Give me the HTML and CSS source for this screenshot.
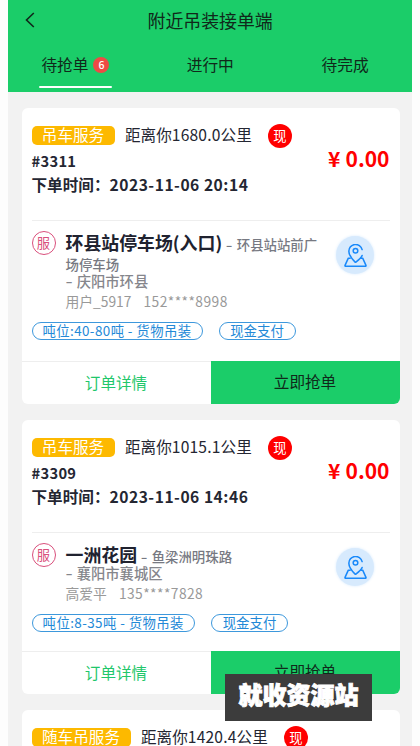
FILE: index.html
```html
<!DOCTYPE html>
<html lang="zh-CN">
<head>
<meta charset="utf-8">
<title>附近吊装接单端</title>
<link rel="stylesheet" href="styles.css">
</head>
<body>
<svg class="defs" width="0" height="0">
  <symbol id="map-pin" viewBox="0 0 24 24">
    <path d="M18.9 12Q18 14.5 12.4 18.9Q12 19.3 11.6 18.9C8.6 15.8 5.1 11.6 5.1 7.7A7 6.9 0 0 1 18.9 5.8"/>
    <circle cx="12" cy="7" r="2.4"/>
    <path d="M6.4 14.8H4.5L1.2 22Q.6 23.3 2 23.3H22Q23.4 23.3 22.8 22L19.5 14.8H17.3"/>
  </symbol>
</svg>
<div class="app">
  <header class="header">
    <div class="bar">
      <svg class="back" viewBox="0 0 10 16"><path d="M8.8 1L1.5 8L8.8 15"/></svg>
      <h1>附近吊装接单端</h1>
    </div>
    <nav class="tabs">
      <div class="tab active"><span>待抢单</span><b class="count">6</b></div>
      <div class="tab">进行中</div>
      <div class="tab">待完成</div>
    </nav>
  </header>
  <main class="list">
    <article class="card">
      <section class="summary">
        <div class="service"><span class="tag">吊车服务</span><span class="distance">距离你<i>1680.0</i>公里</span><span class="cash">现</span></div>
        <div class="number">#3311</div>
        <div class="time">下单时间：<i>2023-11-06 20:14</i></div>
        <div class="price"><span class="yen">¥</span>0.00</div>
      </section>
      <section class="place">
        <span class="serve">服</span>
        <div class="address">
          <div class="street"><strong>环县站停车场(入口)</strong> <span class="dash">-</span> 环县站站前广场停车场</div>
          <div class="city"><span class="dash">-</span> 庆阳市环县</div>
          <div class="user"><span>用户_5917</span><span class="phone">152****8998</span></div>
        </div>
        <span class="map"><svg><use href="#map-pin"/></svg></span>
      </section>
      <div class="pills"><span class="pill load">吨位:40-80吨 - 货物吊装</span><span class="pill pay">现金支付</span></div>
      <footer class="actions"><a class="detail">订单详情</a><a class="grab">立即抢单</a></footer>
    </article>
    <article class="card">
      <section class="summary">
        <div class="service"><span class="tag">吊车服务</span><span class="distance">距离你<i>1015.1</i>公里</span><span class="cash">现</span></div>
        <div class="number">#3309</div>
        <div class="time">下单时间：<i>2023-11-06 14:46</i></div>
        <div class="price"><span class="yen">¥</span>0.00</div>
      </section>
      <section class="place">
        <span class="serve">服</span>
        <div class="address">
          <div class="street"><strong>一洲花园</strong> <span class="dash">-</span> 鱼梁洲明珠路</div>
          <div class="city"><span class="dash">-</span> 襄阳市襄城区</div>
          <div class="user"><span>高爱平</span><span class="phone">135****7828</span></div>
        </div>
        <span class="map"><svg><use href="#map-pin"/></svg></span>
      </section>
      <div class="pills"><span class="pill load short">吨位:8-35吨 - 货物吊装</span><span class="pill pay">现金支付</span></div>
      <footer class="actions"><a class="detail">订单详情</a><a class="grab">立即抢单</a></footer>
    </article>
    <article class="card">
      <section class="summary">
        <div class="service"><span class="tag wide">随车吊服务</span><span class="distance">距离你<i>1420.4</i>公里</span><span class="cash">现</span></div>
      </section>
    </article>
  </main>
  <div class="watermark">就收资源站</div>
</div>
</body>
</html>
```

FILE: styles.css
```css
* { box-sizing: border-box; }

body {
  margin: 0;
  background: #fdfdfd;
  font-family: "Noto Sans CJK SC", "Noto Sans", sans-serif;
  color: #242632;
  overflow: hidden;
}

i { font-style: normal; }
.defs { position: absolute; }

.app {
  position: relative;
  width: 404.5px;
  height: 746px;
  margin-left: 7.5px;
  background: #f2f2f2;
  overflow: hidden;
}

.header { height: 92px; background: #1bcd69; color: #10281a; }
.bar { display: flex; align-items: center; height: 40px; padding-left: 17px; }
.back { width: 10px; height: 16px; fill: none; stroke: #10281a; stroke-width: 1.6; }
.bar h1 { margin: 0 0 0 113px; font-size: 17.9px; font-weight: 400; line-height: 39px; }

.tabs { display: grid; grid-template-columns: repeat(3, 1fr); height: 48px; }
.tab { display: flex; align-items: center; justify-content: center; position: relative; font-size: 15.7px; height: 48px; padding-left: 1px; }
.tab.active::after {
  content: "";
  position: absolute;
  left: 31px;
  bottom: 3px;
  width: 73px;
  height: 2.5px;
  margin-bottom: -3px;
  border-radius: 2px;
  background: #fff;
}
.count {
  width: 16px;
  height: 16px;
  margin: 2px 0 0 5px;
  border-radius: 50%;
  background: #ee4b45;
  color: #fff;
  font-size: 10.5px;
  font-weight: 500;
  line-height: 16px;
  text-align: center;
}

.list { display: flex; flex-direction: column; gap: 16px; padding: 16px 12.5px 0 14px; }
.card { display: flex; flex: none; flex-direction: column; background: #fff; border-radius: 6px; overflow: hidden; }
.card:nth-child(1) { height: 296px; }
.card:nth-child(2) { height: 274px; }

.summary { position: relative; height: 113px; margin: 0 10px; padding-top: 15px; border-bottom: 1px solid #eee; }
.service { display: flex; align-items: center; height: 25px; }
.tag {
  width: 83px;
  height: 19px;
  border-radius: 5px;
  background: #fdb900;
  color: #fff;
  font-size: 15.6px;
  line-height: 17px;
  text-align: center;
}
.tag.wide { width: 99px; }
.distance { margin: -3px 0 0 10.5px; font-size: 15.6px; line-height: 24px; }
.distance i { letter-spacing: .2px; }
.cash {
  width: 24px;
  height: 24px;
  margin-left: 16px;
  border-radius: 50%;
  background: #f00;
  color: #fff;
  font-size: 13.3px;
  line-height: 23px;
  text-align: center;
}
.number { height: 24px; margin-top: 1px; font-size: 14.7px; font-weight: 700; line-height: 24px; letter-spacing: .3px; }
.time { height: 24px; font-size: 15.6px; font-weight: 700; line-height: 23px; white-space: nowrap; }
.time i { letter-spacing: .52px; }
.price { position: absolute; right: 0; top: 35px; color: #f00; font-size: 21px; font-weight: 700; line-height: 30px; }
.yen { margin-right: 5px; }

.place { display: flex; align-items: flex-start; margin: 0 10px; padding-top: 10px; }
.serve {
  flex: none;
  width: 24px;
  height: 24px;
  border: 1.3px solid #d94f7c;
  border-radius: 50%;
  color: #d94f7c;
  font-size: 13.3px;
  line-height: 21px;
  text-align: center;
}
.address { width: 260px; margin-left: 10px; color: #777982; }
.street { font-size: 13.4px; font-weight: 500; line-height: 20px; }
.street strong { color: #20222f; font-size: 17.9px; line-height: 22px; }
.dash { display: inline-block; width: 6px; margin: 0 1.3px; text-align: center; transform: scaleX(1.4); }
.city .dash { margin-left: 0; margin-right: 2px; }
.city { margin-top: -1px; color: #85868c; font-size: 14.3px; font-weight: 500; line-height: 16px; }
.user { display: flex; gap: 12px; color: #999; font-size: 13.8px; line-height: 25px; }
.phone { letter-spacing: .45px; }
.map {
  display: grid;
  place-items: center;
  width: 38px;
  height: 38px;
  margin: 5px 0 0 10.5px;
  border-radius: 50%;
  background: #d7eafd;
  box-shadow: 0 0 3px #d7eafd;
}
.map svg { width: 23px; height: 23px; fill: none; stroke: #1989fa; stroke-width: 1.6; stroke-linecap: round; stroke-linejoin: round; overflow: visible; }

.pills { display: flex; gap: 16px; margin: 8px 10px 0; }
.pill { height: 18px; border: 1.3px solid #3d98dc; border-radius: 9px; color: #2389d7; font-size: 13.4px; line-height: 15px; text-align: center; white-space: nowrap; }
.load { width: 171px; letter-spacing: .42px; }
.load.short { width: 163.5px; }
.pay { width: 77px; }

.actions { display: grid; grid-template-columns: 1fr 1fr; height: 43px; margin-top: auto; font-size: 15.6px; line-height: 41px; text-align: center; }
.detail { border-top: 1px solid #eee; color: #1fc76b; }
.grab { background: #1bcd69; color: #10281a; }

.watermark {
  position: absolute;
  left: 217.5px;
  top: 674px;
  width: 147px;
  height: 47px;
  background: #3c3c3c;
  color: #fff;
  font-size: 24px;
  font-weight: 900;
  line-height: 40px;
  text-align: center;
  -webkit-text-stroke: .9px #fff;
}
```
